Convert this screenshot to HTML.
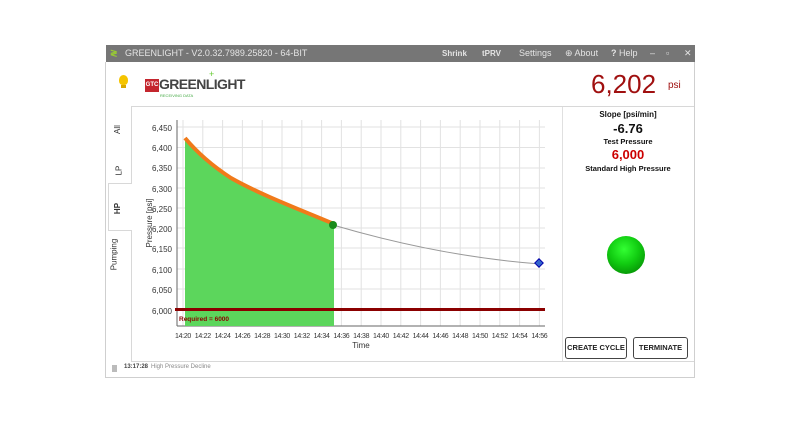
<!DOCTYPE html>
<html><head><style>
*{margin:0;padding:0;box-sizing:border-box}
body{width:800px;height:423px;background:#fff;position:relative;font-family:"Liberation Sans",sans-serif;overflow:hidden}
.a{position:absolute}
.tb{left:106px;top:45px;width:589px;height:17px;background:#767676;color:#e4e4e4;font-size:9px;line-height:17px}
.win{left:105px;top:62px;width:590px;height:316px;border:1px solid #cfcfcf;border-top:none}
.panel{left:131px;top:106px;width:563px;height:256px;border:1px solid #d8d8d8;border-right:none}
.tab{font-size:8px;color:#333;transform:rotate(-90deg);white-space:nowrap}
.btn{border:1px solid #444;border-radius:3px;font-size:7.5px;font-weight:bold;text-align:center;line-height:20px;height:22px;color:#222;background:#fff;white-space:nowrap}
</style></head><body>
<div class="a tb">
 <span class="a" style="left:4px;top:0;color:#9c3;font-weight:bold">≷</span>
 <span class="a" style="left:19px">GREENLIGHT - V2.0.32.7989.25820 - 64-BIT</span>
 <span class="a" style="left:336px;font-weight:bold;font-size:8px">Shrink</span>
 <span class="a" style="left:376px;font-weight:bold;font-size:8px">tPRV</span>
 <span class="a" style="left:413px">Settings</span>
 <span class="a" style="left:459px">⊕ About</span>
 <span class="a" style="left:505px"><b>?</b> Help</span>
 <span class="a" style="left:544px">–</span>
 <span class="a" style="left:560px">▫</span>
 <span class="a" style="left:578px">✕</span>
</div>
<div class="a win"></div>
<div class="a" style="left:119px;top:75px;width:9px;height:10px;background:#f5c400;border-radius:50% 50% 40% 40%"></div>
<div class="a" style="left:121px;top:85px;width:5px;height:3px;background:#d9a800"></div>
<div class="a" style="left:145px;top:79px;width:14px;height:13px;background:#c4262e;color:#fff;font-size:6px;font-weight:bold;line-height:13px;text-align:center">GTC</div>
<div class="a" style="left:159px;top:76px;font-size:14px;color:#444;font-weight:bold;letter-spacing:-0.6px">GREENLIGHT</div>
<div class="a" style="left:209px;top:69px;color:#6c3;font-size:9px">+</div>
<div class="a" style="left:160px;top:93px;font-size:4px;color:#4a4">RECEIVING DATA</div>
<div class="a" style="left:591px;top:69px;font-size:26px;color:#a01010">6,202</div>
<div class="a" style="left:668px;top:80px;font-size:10px;color:#a01010">psi</div>
<div class="a panel"></div>
<div class="a" style="left:108px;top:183px;width:24px;height:48px;border:1px solid #d8d8d8;border-right:none;background:#fff"></div>
<div class="a tab" style="left:113px;top:125px">All</div>
<div class="a tab" style="left:114px;top:166px">LP</div>
<div class="a tab" style="left:112px;top:204px;font-weight:bold">HP</div>
<div class="a tab" style="left:98px;top:250px">Pumping</div>
<svg class="a" style="left:131px;top:110px" width="430" height="250" font-family="Liberation Sans" font-size="8" fill="#333">
<g stroke="#e2e2e2" stroke-width="1">
<line x1="46" y1="17" x2="414" y2="17"/><line x1="46" y1="37.5" x2="414" y2="37.5"/><line x1="46" y1="58" x2="414" y2="58"/><line x1="46" y1="78" x2="414" y2="78"/><line x1="46" y1="98" x2="414" y2="98"/><line x1="46" y1="118" x2="414" y2="118"/><line x1="46" y1="138" x2="414" y2="138"/><line x1="46" y1="159" x2="414" y2="159"/><line x1="46" y1="179" x2="414" y2="179"/>
<line x1="52" y1="10" x2="52" y2="216"/><line x1="71.8" y1="10" x2="71.8" y2="216"/><line x1="91.6" y1="10" x2="91.6" y2="216"/><line x1="111.4" y1="10" x2="111.4" y2="216"/><line x1="131.2" y1="10" x2="131.2" y2="216"/><line x1="151" y1="10" x2="151" y2="216"/><line x1="170.8" y1="10" x2="170.8" y2="216"/><line x1="190.6" y1="10" x2="190.6" y2="216"/><line x1="210.4" y1="10" x2="210.4" y2="216"/><line x1="230.2" y1="10" x2="230.2" y2="216"/><line x1="250" y1="10" x2="250" y2="216"/><line x1="269.8" y1="10" x2="269.8" y2="216"/><line x1="289.6" y1="10" x2="289.6" y2="216"/><line x1="309.4" y1="10" x2="309.4" y2="216"/><line x1="329.2" y1="10" x2="329.2" y2="216"/><line x1="349" y1="10" x2="349" y2="216"/><line x1="368.8" y1="10" x2="368.8" y2="216"/><line x1="388.6" y1="10" x2="388.6" y2="216"/><line x1="408.4" y1="10" x2="408.4" y2="216"/>
</g>
<line x1="46" y1="10" x2="46" y2="216" stroke="#666"/><line x1="46" y1="216" x2="414" y2="216" stroke="#666"/>
<path d="M54,216 L54,28 C64,40 80,55 100,68 C130,85 170,100 203,114 L203,216 Z" fill="#5cd65c"/>
<path d="M54,28 C64,40 80,55 100,68 C130,85 170,100 203,114" fill="none" stroke="#f07a1a" stroke-width="4"/>
<path d="M202,115 C260,132 330,148 409,154" fill="none" stroke="#999" stroke-width="1"/>
<circle cx="202" cy="115" r="4" fill="#1a8a1a"/>
<rect x="405" y="150" width="6" height="6" fill="#36c" stroke="#00a" transform="rotate(45 408 153)"/>
<line x1="44" y1="199.5" x2="414" y2="199.5" stroke="#8b0000" stroke-width="3"/>
<text x="48" y="211" font-size="6.5" font-weight="bold" fill="#8b0000">Required = 6000</text>
<g text-anchor="end">
<text x="41" y="21">6,450</text><text x="41" y="41">6,400</text><text x="41" y="61">6,350</text><text x="41" y="82">6,300</text><text x="41" y="102">6,250</text><text x="41" y="122">6,200</text><text x="41" y="142">6,150</text><text x="41" y="163">6,100</text><text x="41" y="183">6,050</text><text x="41" y="204">6,000</text>
</g>
<text transform="translate(21 113) rotate(-90)" text-anchor="middle">Pressure [psi]</text>
<g text-anchor="middle" font-size="7" letter-spacing="-0.3">
<text x="52" y="228">14:20</text><text x="71.8" y="228">14:22</text><text x="91.6" y="228">14:24</text><text x="111.4" y="228">14:26</text><text x="131.2" y="228">14:28</text><text x="151" y="228">14:30</text><text x="170.8" y="228">14:32</text><text x="190.6" y="228">14:34</text><text x="210.4" y="228">14:36</text><text x="230.2" y="228">14:38</text><text x="250" y="228">14:40</text><text x="269.8" y="228">14:42</text><text x="289.6" y="228">14:44</text><text x="309.4" y="228">14:46</text><text x="329.2" y="228">14:48</text><text x="349" y="228">14:50</text><text x="368.8" y="228">14:52</text><text x="388.6" y="228">14:54</text><text x="408.4" y="228">14:56</text>
</g>
<text x="230" y="238" text-anchor="middle">Time</text>
</svg>
<div class="a" style="left:562px;top:107px;width:1px;height:254px;background:#e0e0e0"></div>
<div class="a" style="left:563px;top:110px;width:130px;text-align:center;color:#111">
 <div style="font-size:8px;font-weight:bold">Slope [psi/min]</div>
 <div style="font-size:13px;font-weight:bold;margin-top:2px">-6.76</div>
 <div style="font-size:7.5px;font-weight:bold;margin-top:1px">Test Pressure</div>
 <div style="font-size:13px;font-weight:bold;color:#c00;margin-top:1px">6,000</div>
 <div style="font-size:7.5px;font-weight:bold;margin-top:2px">Standard High Pressure</div>
</div>
<div class="a" style="left:607px;top:236px;width:38px;height:38px;border-radius:50%;background:radial-gradient(circle at 45% 35%,#3f3 0%,#1c1 45%,#070 100%)"></div>
<div class="a btn" style="left:565px;top:337px;width:62px">CREATE CYCLE</div>
<div class="a btn" style="left:633px;top:337px;width:55px">TERMINATE</div>
<div class="a" style="left:112px;top:365px;width:5px;height:7px;background:#bbb"></div>
<div class="a" style="left:124px;top:364px;font-size:6px;font-weight:bold;color:#444">13:17:28</div>
<div class="a" style="left:151px;top:364px;font-size:6px;color:#888">High Pressure Decline</div>
</body></html>
